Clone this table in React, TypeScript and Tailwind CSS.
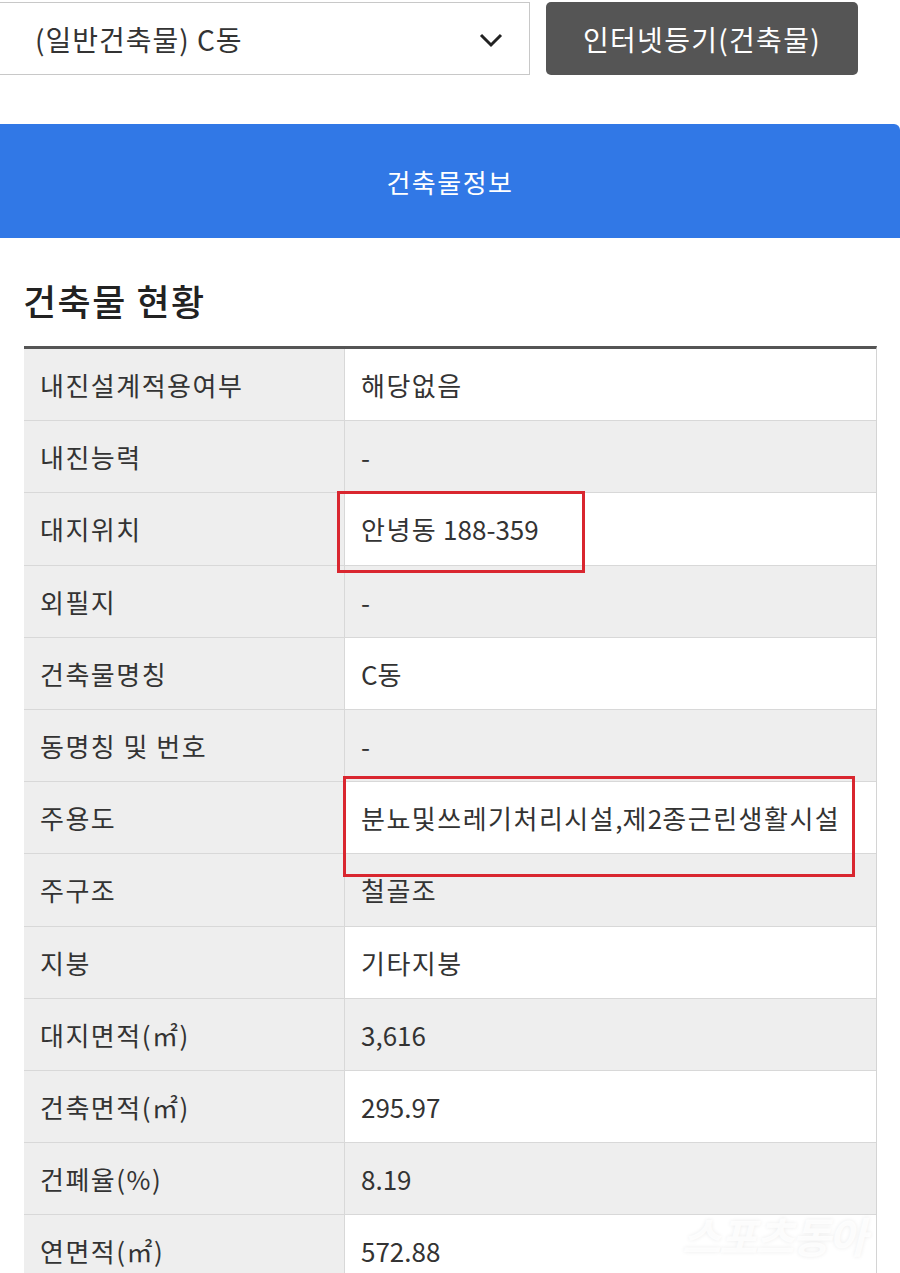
import React from "react";

const rows: [string, string][] = [
  ["내진설계적용여부", "해당없음"],
  ["내진능력", "-"],
  ["대지위치", "안녕동 188-359"],
  ["외필지", "-"],
  ["건축물명칭", "C동"],
  ["동명칭 및 번호", "-"],
  ["주용도", "분뇨및쓰레기처리시설,제2종근린생활시설"],
  ["주구조", "철골조"],
  ["지붕", "기타지붕"],
  ["대지면적(㎡)", "3,616"],
  ["건축면적(㎡)", "295.97"],
  ["건폐율(%)", "8.19"],
  ["연면적(㎡)", "572.88"],
];

function Mixed({ text }: { text: string }) {
  const parts = text.match(/[\uAC00-\uD7A3]+|[^\uAC00-\uD7A3]+/g) || [];
  return (
    <>
      {parts.map((p, i) =>
        /[\uAC00-\uD7A3]/.test(p) ? (
          <span key={i} className="tracking-[1.5px]">
            {p}
          </span>
        ) : (
          <span key={i} className="tracking-[0px]">
            {p}
          </span>
        )
      )}
    </>
  );
}

export default function App() {
  return (
    <div
      className="relative w-[900px] h-[1273px] overflow-hidden bg-white text-[#333]"
      style={{ fontFamily: '"Noto Sans CJK KR", "Noto Sans", sans-serif' }}
    >
      {/* top controls */}
      <div className="flex pt-[2px]">
        <div className="ml-[-2px] flex h-[73px] w-[532px] items-center justify-between border border-[#c8c8c8] bg-white pl-[36px] pr-[26px]">
          <span className="text-[28px] tracking-[1px] text-[#333]">(일반건축물) C동</span>
          <svg width="24" height="16" viewBox="0 0 24 16" className="mt-[2px]">
            <polyline points="2,3 12,13 22,3" fill="none" stroke="#222" strokeWidth="3" />
          </svg>
        </div>
        <div className="ml-[16px] flex h-[73px] w-[312px] items-center justify-center rounded-[5px] bg-[#555555] text-[28px] tracking-[1.3px] text-white">
          인터넷등기(건축물)
        </div>
      </div>

      {/* blue tab */}
      <div className="mt-[49px] flex h-[114px] items-center justify-center rounded-tr-[6px] bg-[#3178e6] text-[26px] tracking-[1.5px] text-white">
        건축물정보
      </div>

      {/* heading */}
      <div className="mt-[38px] pl-[23px] text-[36px] font-medium leading-[48px] tracking-[1.5px] text-[#222]">
        건축물 현황
      </div>

      {/* table */}
      <div className="ml-[24px] mt-[22px] w-[853px] border-t-[3px] border-[#555] border-r border-r-[#d4d4d4]">
        {rows.map(([k, v], i) => (
          <div key={k} className="flex h-[72.2px] border-b border-[#d8d8d8]">
            <div className="flex w-[321px] items-center border-r border-[#d8d8d8] bg-[#eeeeee] pl-[16px] text-[26px] tracking-[1.5px]">
              {k}
            </div>
            <div
              className={`flex flex-1 items-center pl-[16px] text-[26px] ${
                i % 2 === 0 ? "bg-white" : "bg-[#eeeeee]"
              }`}
            >
              <span>
                <Mixed text={v} />
              </span>
            </div>
          </div>
        ))}
      </div>

      {/* red highlight boxes */}
      <div className="absolute left-[337px] top-[491px] h-[82px] w-[248px] border-[3px] border-[#d9262f]" />
      <div className="absolute left-[343px] top-[776px] h-[101px] w-[512px] border-[3px] border-[#d9262f]" />

      {/* watermark */}
      <div
        className="absolute left-[682px] top-[1203px] text-[42px] font-bold italic tracking-[-2px] text-white/80"
        style={{ textShadow: "0 0 4px rgba(0,0,0,0.08)" }}
      >
        스포츠동아
      </div>
    </div>
  );
}
